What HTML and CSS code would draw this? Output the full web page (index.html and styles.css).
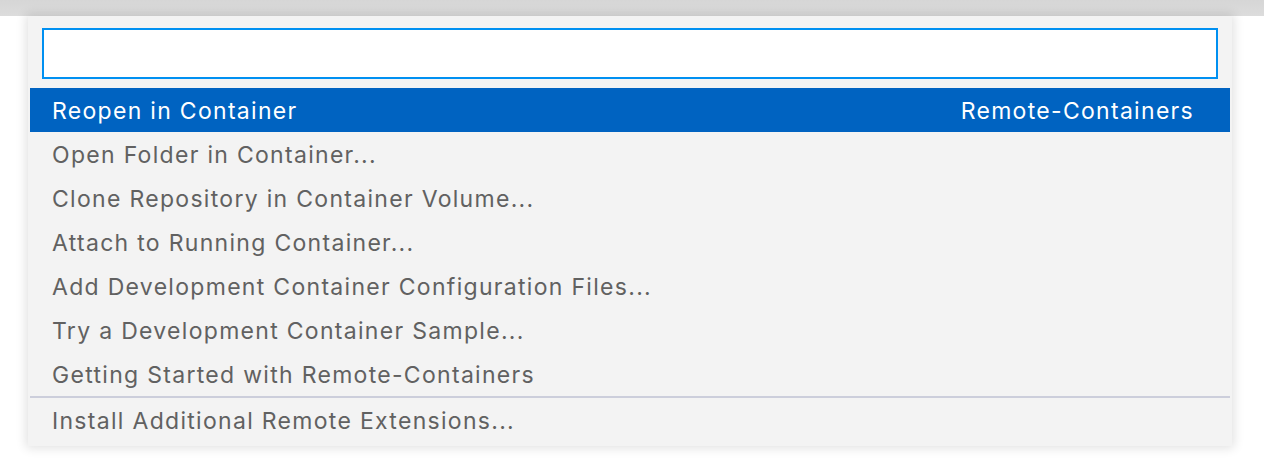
FILE: index.html
```html
<!DOCTYPE html>
<html>
<head>
<meta charset="utf-8">
<link rel="stylesheet" href="styles.css">
</head>
<body>
<div class="topbar"></div>
<div class="stage">
  <div class="picker">
    <div class="input-wrap"><div class="input"></div></div>
    <div class="list">
      <div class="row selected"><span class="label">Reopen in Container</span><span class="desc">Remote-Containers</span></div>
      <div class="row"><span class="label">Open Folder in Container...</span></div>
      <div class="row"><span class="label">Clone Repository in Container Volume...</span></div>
      <div class="row"><span class="label">Attach to Running Container...</span></div>
      <div class="row"><span class="label">Add Development Container Configuration Files...</span></div>
      <div class="row"><span class="label">Try a Development Container Sample...</span></div>
      <div class="row"><span class="label">Getting Started with Remote-Containers</span></div>
      <div class="row separated"><span class="label">Install Additional Remote Extensions...</span></div>
    </div>
  </div>
</div>
</body>
</html>
```
FILE: styles.css
```css
html, body {
  margin: 0;
  padding: 0;
  background: #ffffff;
  width: 1264px;
  height: 476px;
  overflow: hidden;
  font-family: Inter, "Noto Sans", sans-serif;
}
.topbar {
  height: 16px;
  background: linear-gradient(#d6d6d6, #dcdcdc);
}
.stage {
  padding: 0 32px 0 28px;
}
.picker {
  position: relative;
  width: 1204px;
  background: #f3f3f3;
  box-shadow: 0 0 10px 2px rgba(0, 0, 0, 0.12);
  padding: 12px 2px 4px 2px;
  box-sizing: border-box;
}
.input-wrap {
  padding: 0 12px;
}
.input {
  height: 51px;
  box-sizing: border-box;
  border: 2px solid #0090f1;
  background: #ffffff;
}
.list {
  margin-top: 9px;
}
.row {
  height: 44px;
  box-sizing: border-box;
  display: flex;
  align-items: center;
  justify-content: space-between;
  padding: 2px 36px 0 22px;
  font-size: 23px;
  letter-spacing: 1.3px;
  color: #616161;
}
.row.selected {
  background: #0063c1;
  color: #ffffff;
}
.row.separated {
  height: 46px;
  border-top: 2px solid #cccedb;
}
```
